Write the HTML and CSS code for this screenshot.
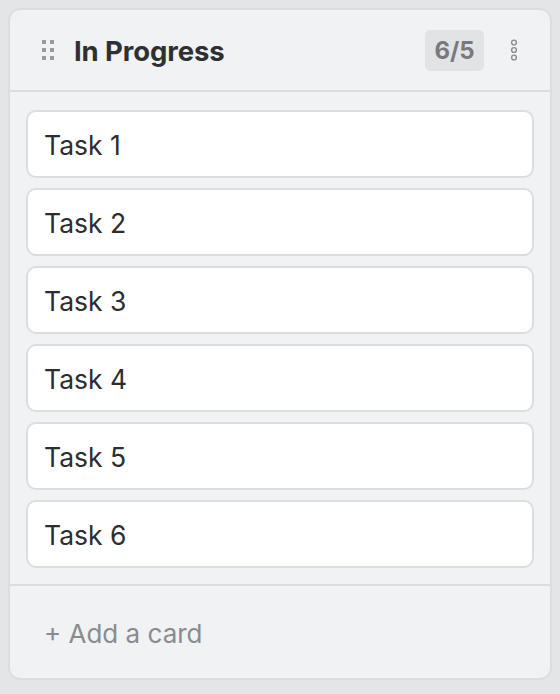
FILE: index.html
```html
<!DOCTYPE html>
<html lang="en">
<head>
<meta charset="utf-8">
<title>Board column</title>
<link rel="stylesheet" href="styles.css">
</head>
<body>
<section class="column">
  <header class="column-header">
    <span class="drag-handle" aria-hidden="true">
      <i></i><i></i><i></i><i></i><i></i><i></i>
    </span>
    <h2 class="column-title">In Progress</h2>
    <span class="count-badge">6/5</span>
    <button class="menu-button" aria-label="Column menu">
      <svg width="10" height="24" viewBox="0 0 10 24" aria-hidden="true">
        <circle cx="5" cy="4.5" r="2.4" fill="none" stroke="#8b8c8f" stroke-width="1.4"/>
        <circle cx="5" cy="12" r="2.4" fill="none" stroke="#8b8c8f" stroke-width="1.4"/>
        <circle cx="5" cy="19.5" r="2.4" fill="none" stroke="#8b8c8f" stroke-width="1.4"/>
      </svg>
    </button>
  </header>
  <div class="card-list">
    <div class="card">Task 1</div>
    <div class="card">Task 2</div>
    <div class="card">Task 3</div>
    <div class="card">Task 4</div>
    <div class="card">Task 5</div>
    <div class="card">Task 6</div>
  </div>
  <footer class="column-footer">
    <button class="add-card">+ Add a card</button>
  </footer>
</section>
</body>
</html>
```
FILE: styles.css
```css
html, body {
  margin: 0;
  padding: 0;
}
body {
  background: #e4e5e7;
  padding: 8px;
  font-family: Inter, "Liberation Sans", sans-serif;
  color: #2c2d31;
}
.column {
  background: #f1f2f4;
  border: 2px solid #dcdde0;
  border-radius: 12px;
  display: flex;
  flex-direction: column;
}
.column-header {
  height: 80px;
  display: flex;
  align-items: center;
  padding: 0 31px 0 32px;
  border-bottom: 2px solid #dcdde0;
}
.drag-handle {
  display: grid;
  grid-template-columns: 4px 4px;
  grid-auto-rows: 4px;
  column-gap: 4px;
  row-gap: 4px;
}
.drag-handle i {
  display: block;
  width: 4px;
  height: 4px;
  background: #9a9b9e;
}
.column-title {
  margin: 0 0 0 20px;
  padding-top: 2px;
  font-size: 27.5px;
  font-weight: 700;
  color: #2e3034;
  flex: 1;
  letter-spacing: -0.1px;
}
.count-badge {
  display: flex;
  align-items: center;
  justify-content: center;
  width: 59px;
  height: 41px;
  background: #e2e3e5;
  border-radius: 5px;
  font-size: 24px;
  font-weight: 700;
  color: #78797c;
}
.menu-button {
  margin-left: 25px;
  border: 0;
  padding: 0;
  background: none;
  width: 10px;
  height: 24px;
  display: flex;
}
.card-list {
  display: flex;
  flex-direction: column;
  gap: 10px;
  padding: 18px 16px 16px;
}
.card {
  height: 64px;
  display: flex;
  align-items: center;
  padding: 2px 16px 0;
  box-sizing: content-box;
  height: 62px;
  background: #ffffff;
  border: 2px solid #dcdde0;
  border-radius: 10px;
  font-size: 26.5px;
  color: #2c2d31;
}
.column-footer {
  height: 92px;
  display: flex;
  align-items: center;
  border-top: 2px solid #dcdde0;
  padding-left: 34px;
}
.add-card {
  border: 0;
  background: none;
  padding: 3px 0 0;
  font-family: inherit;
  font-size: 26px;
  color: #8a8b8e;
}
```
